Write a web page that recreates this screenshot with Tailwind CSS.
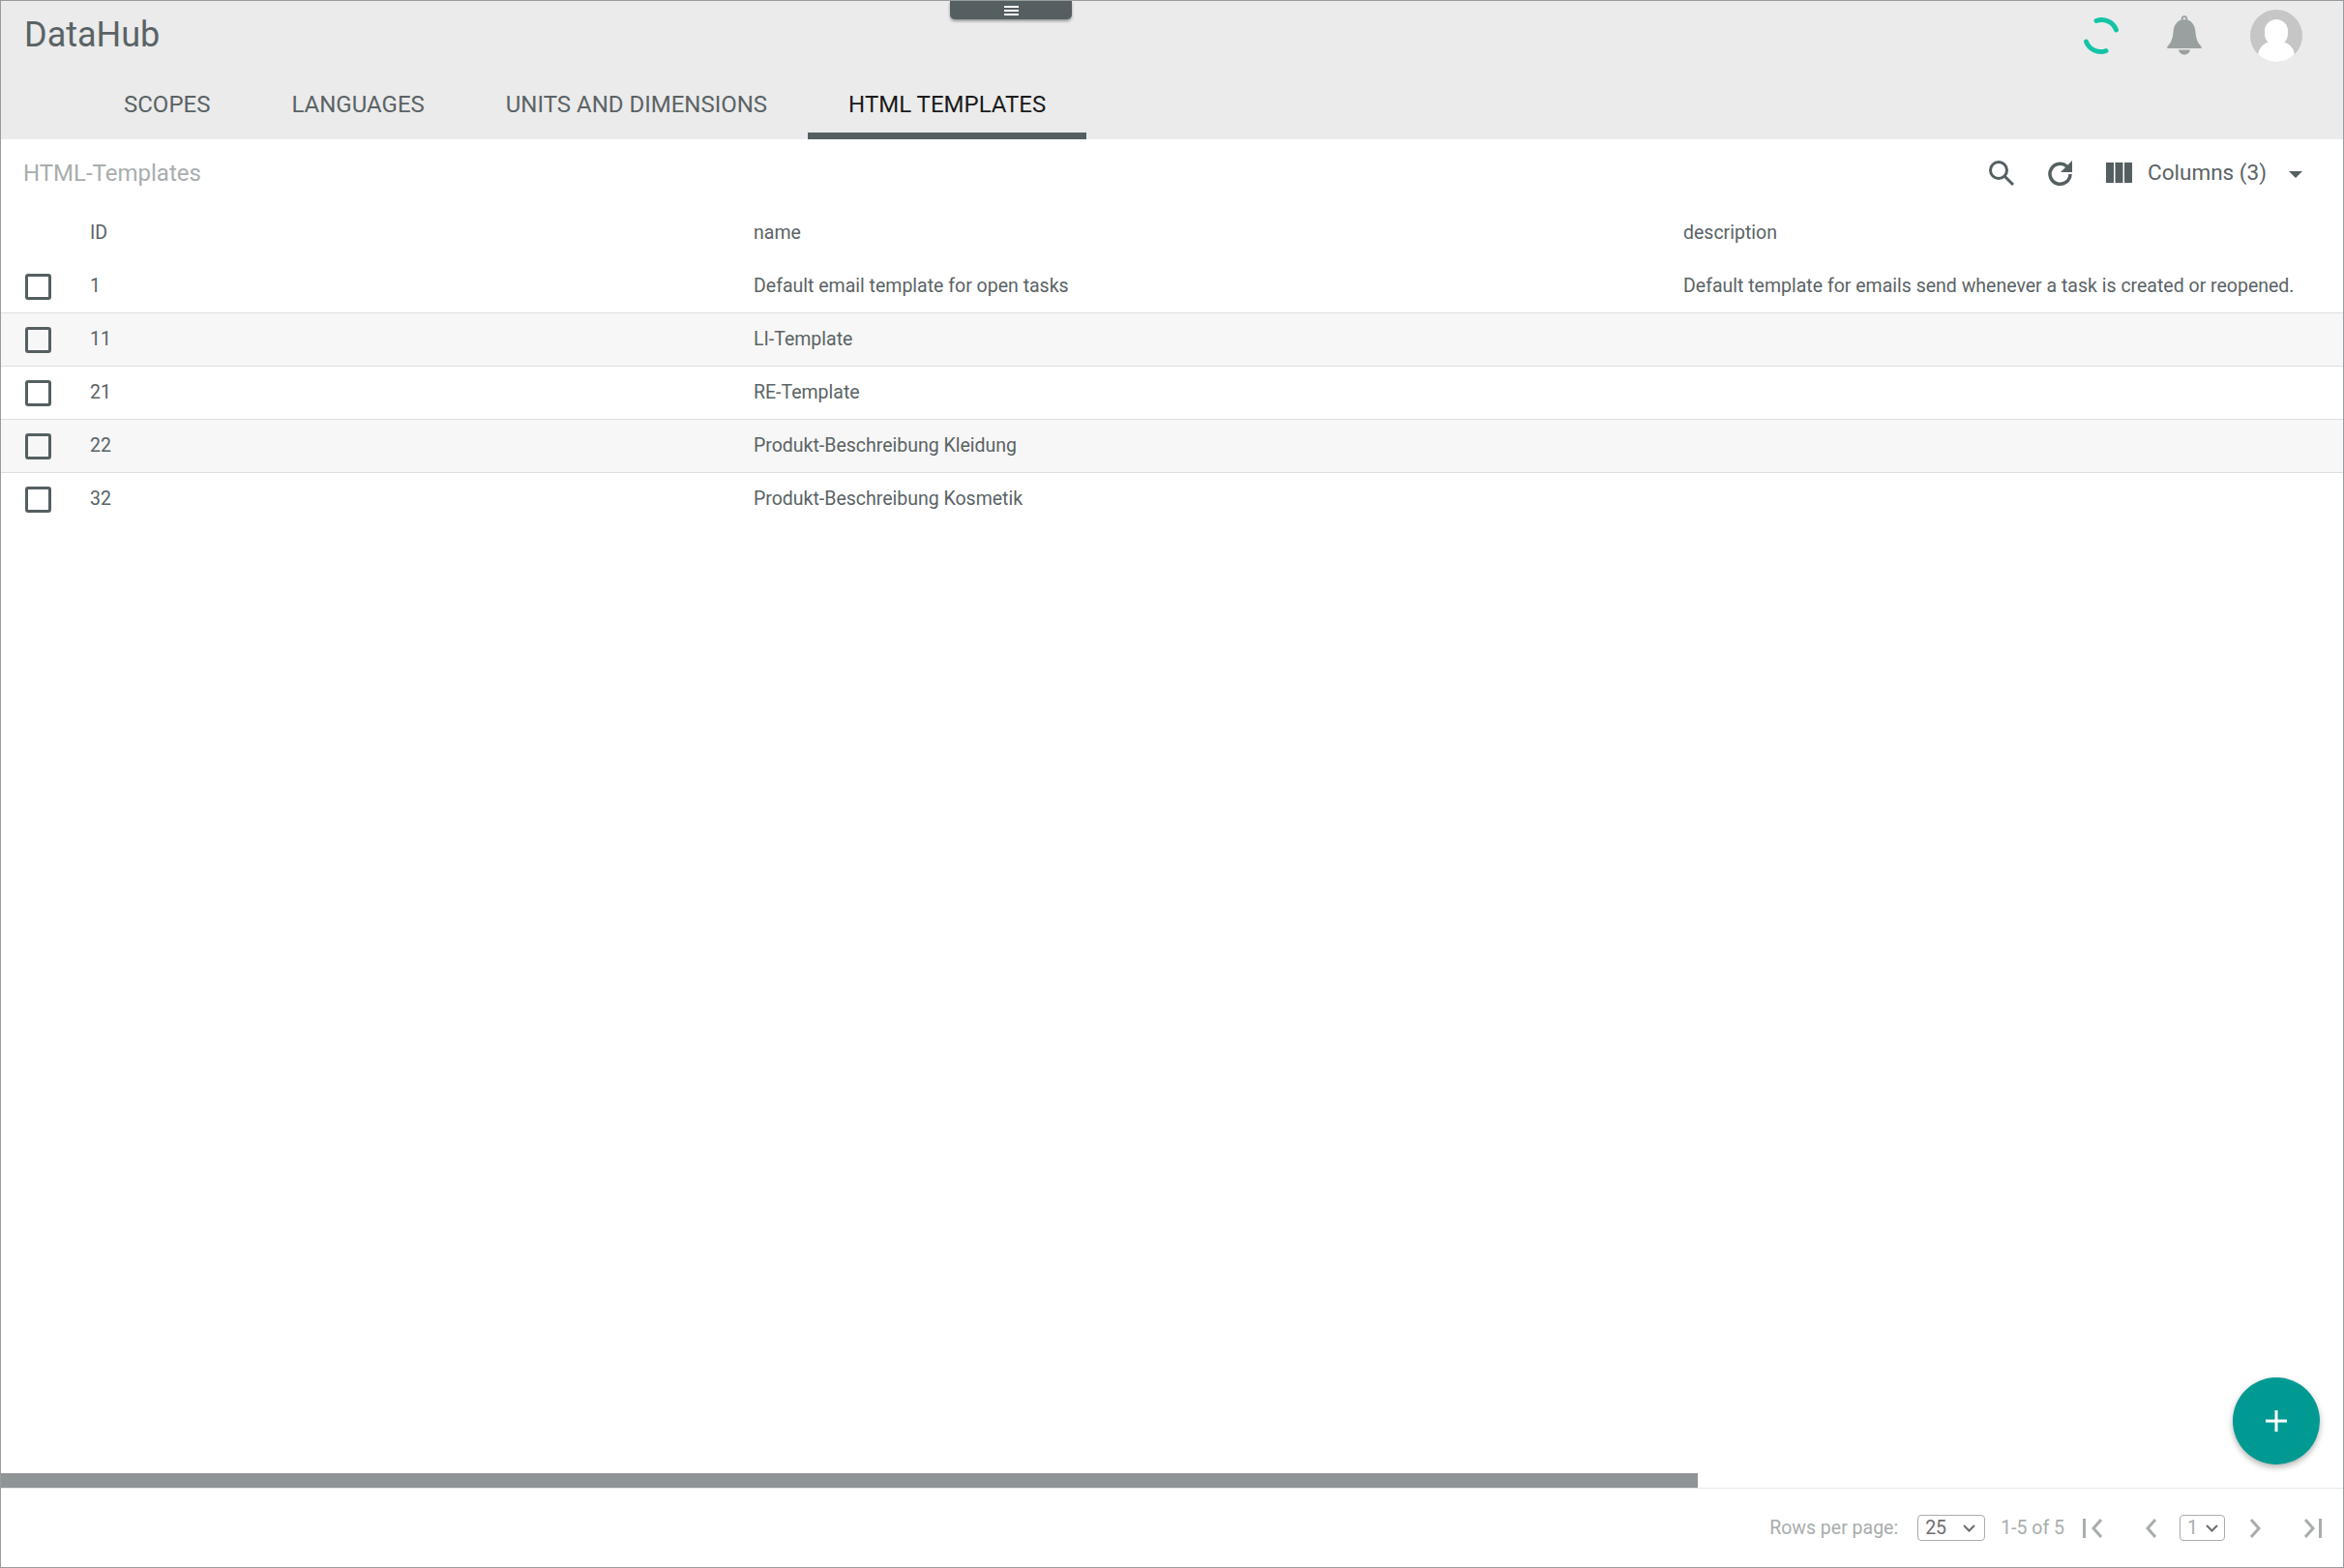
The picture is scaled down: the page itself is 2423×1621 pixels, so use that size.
<!DOCTYPE html>
<html lang="en">
  <head>
    <meta charset="UTF-8">
    <title>DataHub</title>
    <script src="https://cdn.jsdelivr.net/npm/@tailwindcss/browser@4"></script>
  </head>
  <body class="bg-white">
    <div class="relative w-[2423px] h-[1621px] flex flex-col border border-[#999c9d] overflow-hidden font-['Roboto',sans-serif] text-[#5a6365]">
      <!-- top menu handle -->
      <div class="absolute left-[981px] top-0 w-[126px] h-[19px] bg-[#555f61] rounded-b-[5px] shadow-[0_2px_3px_rgba(0,0,0,0.35)] flex flex-col items-center justify-center gap-[2px]">
        <span class="w-[15px] h-[2px] bg-white"></span>
        <span class="w-[15px] h-[2px] bg-white"></span>
        <span class="w-[15px] h-[2px] bg-white"></span>
      </div>

      <header class="h-[143px] shrink-0 bg-[#ebebeb] flex flex-col">
        <div class="h-[71px] flex items-center justify-between pl-[24px] pr-[42px]">
          <span class="text-[36px] leading-none mb-[1px]">DataHub</span>
          <div class="flex items-center">
            <svg class="w-[40px] h-[40px]" viewBox="0 0 40 40" fill="none" stroke="#14c4a6" stroke-width="5" stroke-linecap="round">
              <path d="M15 4.500 A 16 16 0 0 1 35.500 14"/>
              <path d="M25 35.500 A 16 16 0 0 1 4.500 26"/>
            </svg>
            <svg class="w-[36px] h-[42px] ml-[48px] mb-[1px]" viewBox="0 0 36 42" fill="#9aa0a0">
              <path d="M18 1a3.500 3.500 0 0 0-3.200 4.600C9.500 7.400 7 12 6.500 18c-.5 6-1.500 10-5.500 14.500-.8.800-1 2-.5 2.500H35.500c.5-.5.300-1.700-.5-2.500-4-4.500-5-8.500-5.500-14.500-.5-6-3-10.600-8.300-12.400A3.500 3.500 0 0 0 18 1zm0 2a1.500 1.500 0 0 1 1.300 2.200h-2.600A1.500 1.500 0 0 1 18 3z"/>
              <path d="M12 36.500h12c-.5 2.800-3 5-6 5s-5.500-2.200-6-5z"/>
            </svg>
            <div class="relative w-[54px] h-[54px] ml-[50px] rounded-full bg-[#c6c6c6] overflow-hidden">
              <span class="absolute left-[15px] top-[10px] w-[24px] h-[27px] rounded-full bg-white"></span>
              <span class="absolute left-[8px] top-[33px] w-[38px] h-[30px] rounded-full bg-white"></span>
            </div>
          </div>
        </div>
        <nav class="flex-1 flex pl-[85px] text-[24px]">
          <a class="px-[42px] flex items-center">SCOPES</a>
          <a class="px-[42px] flex items-center">LANGUAGES</a>
          <a class="px-[42px] flex items-center">UNITS AND DIMENSIONS</a>
          <a class="px-[42px] pt-[7px] flex items-center text-[#1a1a1a] border-b-[7px] border-[#555f61]">HTML TEMPLATES</a>
        </nav>
      </header>

      <main class="flex-1 flex flex-col">
        <div class="h-[69px] flex items-center justify-between pl-[23px] pr-[41px]">
          <span class="text-[24px] text-[#a8adad]">HTML-Templates</span>
          <div class="flex items-center">
            <svg class="w-[28px] h-[28px]" viewBox="0 0 28 28" fill="none" stroke="#555f61" stroke-width="3">
              <circle cx="11" cy="11" r="8.500"/>
              <path d="M17 17l9 9"/>
            </svg>
            <svg class="w-[28px] h-[28px] ml-[33px]" viewBox="0 0 28 28" fill="none" stroke="#555f61" stroke-width="3.500">
              <path d="M24 15a10.500 10.500 0 1 1-3.500-8"/>
              <path d="M26 1v12H14z" fill="#555f61" stroke="none"/>
            </svg>
            <svg class="w-[27px] h-[21px] ml-[33px]" viewBox="0 0 27 21" fill="#555f61">
              <rect x="0" y="0" width="8" height="21"/>
              <rect x="9.500" y="0" width="8" height="21"/>
              <rect x="19" y="0" width="8" height="21"/>
            </svg>
            <span class="text-[22.500px] ml-[16px]">Columns (3)</span>
            <span class="ml-[23px] mr-[1px] mt-[4px] w-0 h-0 border-x-[7px] border-x-transparent border-t-[7px] border-t-[#555f61]"></span>
          </div>
        </div>

        <div class="grid grid-cols-[92px_686px_961px_1fr] h-[56px] items-center text-[19.500px]">
          <span></span><span>ID</span><span>name</span><span>description</span>
        </div>

        <div class="flex flex-col text-[19.500px]">
          <div class="grid grid-cols-[92px_686px_961px_1fr] h-[55px] items-center border-b border-[#dedede]">
            <span class="ml-[25px] w-[27px] h-[27px] border-[3px] border-[#555f61] rounded-[3px]"></span><span>1</span><span>Default email template for open tasks</span><span class="whitespace-nowrap">Default template for emails send whenever a task is created or reopened.</span>
          </div>
          <div class="grid grid-cols-[92px_686px_961px_1fr] h-[55px] items-center border-b border-[#dedede] bg-[#f7f7f7]">
            <span class="ml-[25px] w-[27px] h-[27px] border-[3px] border-[#555f61] rounded-[3px]"></span><span>11</span><span>LI-Template</span><span></span>
          </div>
          <div class="grid grid-cols-[92px_686px_961px_1fr] h-[55px] items-center border-b border-[#dedede]">
            <span class="ml-[25px] w-[27px] h-[27px] border-[3px] border-[#555f61] rounded-[3px]"></span><span>21</span><span>RE-Template</span><span></span>
          </div>
          <div class="grid grid-cols-[92px_686px_961px_1fr] h-[55px] items-center border-b border-[#dedede] bg-[#f7f7f7]">
            <span class="ml-[25px] w-[27px] h-[27px] border-[3px] border-[#555f61] rounded-[3px]"></span><span>22</span><span>Produkt-Beschreibung Kleidung</span><span></span>
          </div>
          <div class="grid grid-cols-[92px_686px_961px_1fr] h-[55px] items-center pb-[1px]">
            <span class="ml-[25px] w-[27px] h-[27px] border-[3px] border-[#555f61] rounded-[3px]"></span><span>32</span><span>Produkt-Beschreibung Kosmetik</span><span></span>
          </div>
        </div>

        <div class="flex-1"></div>
        <div class="h-[15px] w-[1754px] bg-[#8f9496]"></div>
      </main>

      <footer class="h-[82px] shrink-0 border-t border-[#e8e8e8] flex items-center justify-end pr-[22px] text-[19.500px] text-[#a8adad]">
        <span>Rows per page:</span>
        <span class="ml-[20px] w-[70px] h-[27px] border border-[#a8adad] rounded-[4px] flex items-center justify-between pl-[7px] pr-[9px] text-[#6e6e6e]">25
          <svg class="w-[13px] h-[8px]" viewBox="0 0 13 8" fill="none" stroke="#6e6e6e" stroke-width="2"><path d="M1 1l5.500 5.500L12 1"/></svg>
        </span>
        <span class="ml-[16px]">1-5 of 5</span>
        <svg class="ml-[19px] w-[20px] h-[22px]" viewBox="0 0 20 22" fill="none" stroke="#a8adad" stroke-width="3"><path d="M1.500 1v20"/><path d="M19 2l-8 9 8 9"/></svg>
        <svg class="ml-[44px] w-[12px] h-[22px]" viewBox="0 0 12 22" fill="none" stroke="#a8adad" stroke-width="3"><path d="M11 2l-8 9 8 9"/></svg>
        <span class="ml-[24px] w-[47px] h-[27px] border border-[#a8adad] rounded-[4px] flex items-center justify-between pl-[7px] pr-[6px]">1
          <svg class="w-[13px] h-[8px]" viewBox="0 0 13 8" fill="none" stroke="#6e6e6e" stroke-width="2"><path d="M1 1l5.500 5.500L12 1"/></svg>
        </span>
        <svg class="ml-[26px] w-[12px] h-[22px]" viewBox="0 0 12 22" fill="none" stroke="#a8adad" stroke-width="3"><path d="M1 2l8 9-8 9"/></svg>
        <svg class="ml-[44px] w-[18px] h-[22px]" viewBox="0 0 18 22" fill="none" stroke="#a8adad" stroke-width="3"><path d="M1 2l8 9-8 9"/><path d="M16.500 1v20"/></svg>
      </footer>

      <!-- add button -->
      <div class="absolute left-[2307px] top-[1423px] w-[90px] h-[90px] rounded-full bg-[#009a93] shadow-[0_3px_6px_rgba(0,0,0,0.3)] flex items-center justify-center">
        <svg class="w-[22px] h-[22px]" viewBox="0 0 22 22" stroke="#fff" stroke-width="3"><path d="M11 0v22M0 11h22"/></svg>
      </div>
    </div>
  </body>
</html>
